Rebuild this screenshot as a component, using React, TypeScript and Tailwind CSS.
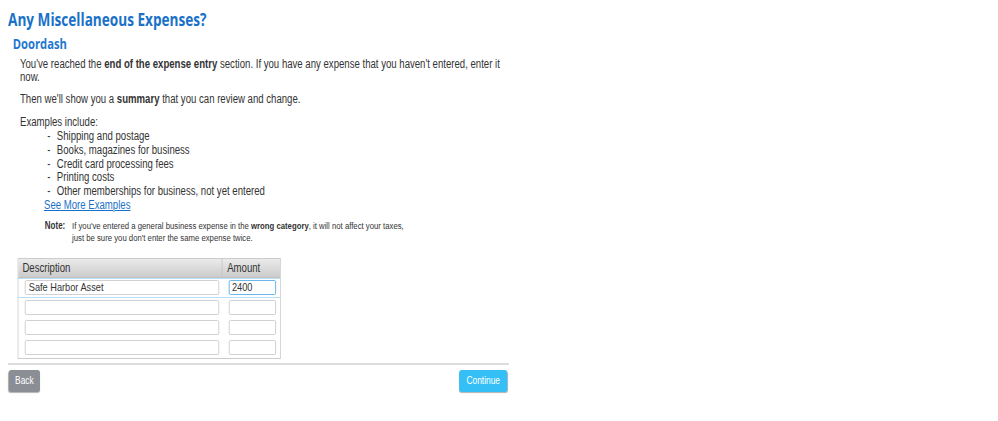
import React from "react";

const examples = [
  "Shipping and postage",
  "Books, magazines for business",
  "Credit card processing fees",
  "Printing costs",
  "Other memberships for business, not yet entered",
];

const rows = [
  { desc: "Safe Harbor Asset", amount: "2400" },
  { desc: "", amount: "" },
  { desc: "", amount: "" },
  { desc: "", amount: "" },
];

// the original screen is rendered narrow, so the whole panel is squeezed horizontally
export default function App() {
  return (
    <div className="w-[998px] h-[421px] bg-white overflow-hidden font-['Liberation_Sans',Arial,sans-serif] text-[#333]">
      <div className="w-[640px] pl-[10px] pt-[9px] origin-top-left scale-x-[0.8]">
        <h1 className="font-['Open_Sans',sans-serif] font-bold text-[17px] leading-[22px] text-[#1a72c8]">
          Any Miscellaneous Expenses?
        </h1>
        <h2 className="ml-[6px] mt-[4px] font-['Open_Sans',sans-serif] font-bold text-[14px] leading-[18px] text-[#1e78cf]">
          Doordash
        </h2>

        <div className="ml-[15px] mt-[5px] w-[612px] text-[12px] leading-[12px]">
          <p className="leading-[13px]">
            You've reached the <b>end of the expense entry</b> section. If you have any expense that
            you haven't entered, enter it now.
          </p>
          <p className="mt-[9px]">
            Then we'll show you a <b>summary</b> that you can review and change.
          </p>
          <p className="mt-[11px]">Examples include:</p>
          <ul className="ml-[34px] mt-[2px]">
            {examples.map((e) => (
              <li key={e} className="flex leading-[13.8px]">
                <span className="w-[12px]">-</span>
                <span>{e}</span>
              </li>
            ))}
          </ul>
          <a href="#" className="block ml-[30px] leading-[13px] text-[#1a72c8] underline">
            See More Examples
          </a>
          <div className="flex ml-[31px] mt-[8px] text-[9.7px] leading-[12px]">
            <span className="font-bold text-[10px] w-[34px] shrink-0">Note:</span>
            <span>
              If you've entered a general business expense in the <b>wrong category</b>, it will not
              affect your taxes,
              <br />
              just be sure you don't enter the same expense twice.
            </span>
          </div>
        </div>

        <div className="ml-[12px] mt-[14px] w-[329px] border border-[#cccccc] text-[12px]">
          <div className="flex h-[19px] bg-gradient-to-b from-[#ebebeb] to-[#cbcbcb] border-b border-[#c2c2c2]">
            <div className="w-[255px] border-r border-[#c2c2c2] pl-[5px] leading-[18px]">Description</div>
            <div className="flex-1 pl-[6px] leading-[18px]">Amount</div>
          </div>
          {rows.map((r, i) => (
            <div
              key={i}
              className={
                i === 0
                  ? "flex items-center h-[20px] border-y border-[#b6e0f5] -mx-px px-px"
                  : "flex items-center h-[20px]"
              }
            >
              <div className="w-[255px] pl-[8px] pr-[4px]">
                <input
                  readOnly
                  value={r.desc}
                  className="block w-full h-[15px] border border-[#cccccc] rounded-[2px] px-[4px] text-[11.5px] text-[#333] bg-white outline-none"
                />
              </div>
              <div className="flex-1 pl-[8px] pr-[5px]">
                <input
                  readOnly
                  value={r.amount}
                  className={
                    i === 0
                      ? "block w-full h-[15px] border border-[#5aaee8] rounded-[2px] px-[3px] text-[11.5px] text-[#333] bg-white outline-none"
                      : "block w-full h-[15px] border border-[#cccccc] rounded-[2px] px-[3px] text-[11.5px] text-[#333] bg-white outline-none"
                  }
                />
              </div>
            </div>
          ))}
        </div>

        <div className="mt-[4px] w-[626px] h-[2px] bg-[#dcdcdc]" />

        <div className="flex justify-between w-[626px] mt-[5px] pl-[1px] pr-[2px]">
          <button className="w-[39px] h-[22px] rounded-[3px] bg-[#8b8e95] text-white text-[10.5px] shadow-[0_1px_1px_rgba(0,0,0,0.3)]">
            Back
          </button>
          <button className="w-[60px] h-[22px] rounded-[3px] bg-[#35bff7] text-white text-[10.5px] shadow-[0_1px_1px_rgba(0,0,0,0.3)]">
            Continue
          </button>
        </div>
      </div>
    </div>
  );
}
